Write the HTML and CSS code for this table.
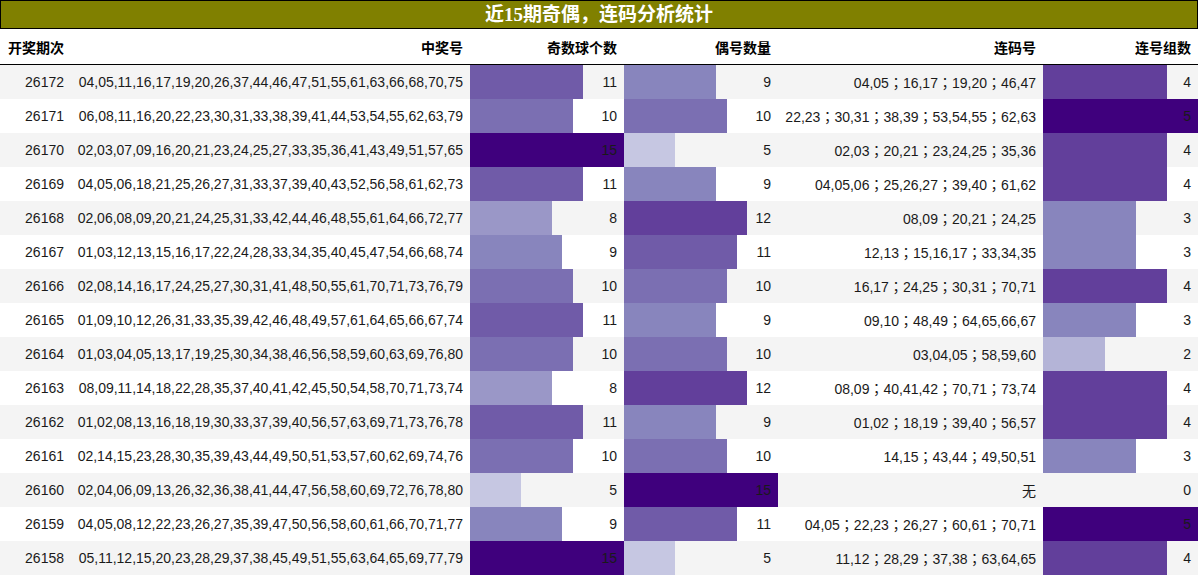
FILE: index.html
```html
<!DOCTYPE html>
<html lang="zh">
<head>
<meta charset="utf-8">
<title>近15期奇偶，连码分析统计</title>
<link rel="stylesheet" href="styles.css">
</head>
<body>
<div class="sheet">
  <div class="title">近15期奇偶，连码分析统计</div>
  <div class="row head">
    <div class="cell c1">开奖期次</div>
    <div class="cell">中奖号</div>
    <div class="cell">奇数球个数</div>
    <div class="cell">偶号数量</div>
    <div class="cell">连码号</div>
    <div class="cell">连号组数</div>
  </div>

  <div class="row">
    <div class="cell c1">26172</div>
    <div class="cell">04,05,11,16,17,19,20,26,37,44,46,47,51,55,61,63,66,68,70,75</div>
    <div class="cell bc"><span class="bar" style="width:73.33%;background:#705ba8"></span><span class="num">11</span></div>
    <div class="cell bc"><span class="bar" style="width:60%;background:#8885bd"></span><span class="num">9</span></div>
    <div class="cell lian">04,05；16,17；19,20；46,47</div>
    <div class="cell bc"><span class="bar" style="width:80%;background:#623f9b"></span><span class="num">4</span></div>
  </div>
  <div class="row">
    <div class="cell c1">26171</div>
    <div class="cell">06,08,11,16,20,22,23,30,31,33,38,39,41,44,53,54,55,62,63,79</div>
    <div class="cell bc"><span class="bar" style="width:66.67%;background:#7b6fb2"></span><span class="num">10</span></div>
    <div class="cell bc"><span class="bar" style="width:66.67%;background:#7b6fb2"></span><span class="num">10</span></div>
    <div class="cell lian">22,23；30,31；38,39；53,54,55；62,63</div>
    <div class="cell bc"><span class="bar" style="width:100%;background:#3f007d"></span><span class="num">5</span></div>
  </div>
  <div class="row">
    <div class="cell c1">26170</div>
    <div class="cell">02,03,07,09,16,20,21,23,24,25,27,33,35,36,41,43,49,51,57,65</div>
    <div class="cell bc"><span class="bar" style="width:100%;background:#3f007d"></span><span class="num">15</span></div>
    <div class="cell bc"><span class="bar" style="width:33.33%;background:#c6c7e2"></span><span class="num">5</span></div>
    <div class="cell lian">02,03；20,21；23,24,25；35,36</div>
    <div class="cell bc"><span class="bar" style="width:80%;background:#623f9b"></span><span class="num">4</span></div>
  </div>
  <div class="row">
    <div class="cell c1">26169</div>
    <div class="cell">04,05,06,18,21,25,26,27,31,33,37,39,40,43,52,56,58,61,62,73</div>
    <div class="cell bc"><span class="bar" style="width:73.33%;background:#705ba8"></span><span class="num">11</span></div>
    <div class="cell bc"><span class="bar" style="width:60%;background:#8885bd"></span><span class="num">9</span></div>
    <div class="cell lian">04,05,06；25,26,27；39,40；61,62</div>
    <div class="cell bc"><span class="bar" style="width:80%;background:#623f9b"></span><span class="num">4</span></div>
  </div>
  <div class="row">
    <div class="cell c1">26168</div>
    <div class="cell">02,06,08,09,20,21,24,25,31,33,42,44,46,48,55,61,64,66,72,77</div>
    <div class="cell bc"><span class="bar" style="width:53.33%;background:#9a97c7"></span><span class="num">8</span></div>
    <div class="cell bc"><span class="bar" style="width:80%;background:#623f9b"></span><span class="num">12</span></div>
    <div class="cell lian">08,09；20,21；24,25</div>
    <div class="cell bc"><span class="bar" style="width:60%;background:#8885bd"></span><span class="num">3</span></div>
  </div>
  <div class="row">
    <div class="cell c1">26167</div>
    <div class="cell">01,03,12,13,15,16,17,22,24,28,33,34,35,40,45,47,54,66,68,74</div>
    <div class="cell bc"><span class="bar" style="width:60%;background:#8885bd"></span><span class="num">9</span></div>
    <div class="cell bc"><span class="bar" style="width:73.33%;background:#705ba8"></span><span class="num">11</span></div>
    <div class="cell lian">12,13；15,16,17；33,34,35</div>
    <div class="cell bc"><span class="bar" style="width:60%;background:#8885bd"></span><span class="num">3</span></div>
  </div>
  <div class="row">
    <div class="cell c1">26166</div>
    <div class="cell">02,08,14,16,17,24,25,27,30,31,41,48,50,55,61,70,71,73,76,79</div>
    <div class="cell bc"><span class="bar" style="width:66.67%;background:#7b6fb2"></span><span class="num">10</span></div>
    <div class="cell bc"><span class="bar" style="width:66.67%;background:#7b6fb2"></span><span class="num">10</span></div>
    <div class="cell lian">16,17；24,25；30,31；70,71</div>
    <div class="cell bc"><span class="bar" style="width:80%;background:#623f9b"></span><span class="num">4</span></div>
  </div>
  <div class="row">
    <div class="cell c1">26165</div>
    <div class="cell">01,09,10,12,26,31,33,35,39,42,46,48,49,57,61,64,65,66,67,74</div>
    <div class="cell bc"><span class="bar" style="width:73.33%;background:#705ba8"></span><span class="num">11</span></div>
    <div class="cell bc"><span class="bar" style="width:60%;background:#8885bd"></span><span class="num">9</span></div>
    <div class="cell lian">09,10；48,49；64,65,66,67</div>
    <div class="cell bc"><span class="bar" style="width:60%;background:#8885bd"></span><span class="num">3</span></div>
  </div>
  <div class="row">
    <div class="cell c1">26164</div>
    <div class="cell">01,03,04,05,13,17,19,25,30,34,38,46,56,58,59,60,63,69,76,80</div>
    <div class="cell bc"><span class="bar" style="width:66.67%;background:#7b6fb2"></span><span class="num">10</span></div>
    <div class="cell bc"><span class="bar" style="width:66.67%;background:#7b6fb2"></span><span class="num">10</span></div>
    <div class="cell lian">03,04,05；58,59,60</div>
    <div class="cell bc"><span class="bar" style="width:40%;background:#b4b4d7"></span><span class="num">2</span></div>
  </div>
  <div class="row">
    <div class="cell c1">26163</div>
    <div class="cell">08,09,11,14,18,22,28,35,37,40,41,42,45,50,54,58,70,71,73,74</div>
    <div class="cell bc"><span class="bar" style="width:53.33%;background:#9a97c7"></span><span class="num">8</span></div>
    <div class="cell bc"><span class="bar" style="width:80%;background:#623f9b"></span><span class="num">12</span></div>
    <div class="cell lian">08,09；40,41,42；70,71；73,74</div>
    <div class="cell bc"><span class="bar" style="width:80%;background:#623f9b"></span><span class="num">4</span></div>
  </div>
  <div class="row">
    <div class="cell c1">26162</div>
    <div class="cell">01,02,08,13,16,18,19,30,33,37,39,40,56,57,63,69,71,73,76,78</div>
    <div class="cell bc"><span class="bar" style="width:73.33%;background:#705ba8"></span><span class="num">11</span></div>
    <div class="cell bc"><span class="bar" style="width:60%;background:#8885bd"></span><span class="num">9</span></div>
    <div class="cell lian">01,02；18,19；39,40；56,57</div>
    <div class="cell bc"><span class="bar" style="width:80%;background:#623f9b"></span><span class="num">4</span></div>
  </div>
  <div class="row">
    <div class="cell c1">26161</div>
    <div class="cell">02,14,15,23,28,30,35,39,43,44,49,50,51,53,57,60,62,69,74,76</div>
    <div class="cell bc"><span class="bar" style="width:66.67%;background:#7b6fb2"></span><span class="num">10</span></div>
    <div class="cell bc"><span class="bar" style="width:66.67%;background:#7b6fb2"></span><span class="num">10</span></div>
    <div class="cell lian">14,15；43,44；49,50,51</div>
    <div class="cell bc"><span class="bar" style="width:60%;background:#8885bd"></span><span class="num">3</span></div>
  </div>
  <div class="row">
    <div class="cell c1">26160</div>
    <div class="cell">02,04,06,09,13,26,32,36,38,41,44,47,56,58,60,69,72,76,78,80</div>
    <div class="cell bc"><span class="bar" style="width:33.33%;background:#c6c7e2"></span><span class="num">5</span></div>
    <div class="cell bc"><span class="bar" style="width:100%;background:#3f007d"></span><span class="num">15</span></div>
    <div class="cell">无</div>
    <div class="cell bc"><span class="bar" style="width:0%"></span><span class="num">0</span></div>
  </div>
  <div class="row">
    <div class="cell c1">26159</div>
    <div class="cell">04,05,08,12,22,23,26,27,35,39,47,50,56,58,60,61,66,70,71,77</div>
    <div class="cell bc"><span class="bar" style="width:60%;background:#8885bd"></span><span class="num">9</span></div>
    <div class="cell bc"><span class="bar" style="width:73.33%;background:#705ba8"></span><span class="num">11</span></div>
    <div class="cell lian">04,05；22,23；26,27；60,61；70,71</div>
    <div class="cell bc"><span class="bar" style="width:100%;background:#3f007d"></span><span class="num">5</span></div>
  </div>
  <div class="row">
    <div class="cell c1">26158</div>
    <div class="cell">05,11,12,15,20,23,28,29,37,38,45,49,51,55,63,64,65,69,77,79</div>
    <div class="cell bc"><span class="bar" style="width:100%;background:#3f007d"></span><span class="num">15</span></div>
    <div class="cell bc"><span class="bar" style="width:33.33%;background:#c6c7e2"></span><span class="num">5</span></div>
    <div class="cell lian">11,12；28,29；37,38；63,64,65</div>
    <div class="cell bc"><span class="bar" style="width:80%;background:#623f9b"></span><span class="num">4</span></div>
  </div>
</div>
</body>
</html>
```
FILE: styles.css
```css
html, body {
  margin: 0;
  padding: 0;
  background: #ffffff;
}

.sheet {
  width: 1198px;
  font-family: "Liberation Sans", "Noto Sans CJK SC", sans-serif;
  font-size: 14px;
  color: #1a1a1a;
}

.title {
  height: 27px;
  border: 1px solid #000000;
  background: #808000;
  color: #ffffff;
  font-family: "Liberation Serif", "Noto Sans CJK SC", serif;
  font-weight: bold;
  font-size: 19px;
  line-height: 27px;
  text-align: center;
}

.row {
  display: grid;
  grid-template-columns: 70px 400px 154px 154px 265px 155px;
  height: 34px;
}

.row:nth-child(odd) {
  background: #f4f4f4;
}

.row.head {
  height: 35px;
  background: #ffffff;
  border-bottom: 1px solid #000000;
  font-weight: bold;
  color: #000000;
}

.cell {
  display: flex;
  align-items: center;
  justify-content: flex-end;
  padding: 0 7px;
  white-space: nowrap;
  overflow: hidden;
}

.cell.c1 {
  padding-right: 6px;
}

.cell.lian {
  font-family: "Liberation Sans", "Noto Sans CJK TC", sans-serif;
}

.cell.bc {
  display: grid;
  grid-template-columns: 100%;
  grid-template-rows: 100%;
  padding: 0;
}

.bar,
.num {
  grid-area: 1 / 1;
}

.bar {
  display: block;
  height: 100%;
  justify-self: start;
}

.num {
  align-self: center;
  justify-self: end;
  padding-right: 7px;
}
```
